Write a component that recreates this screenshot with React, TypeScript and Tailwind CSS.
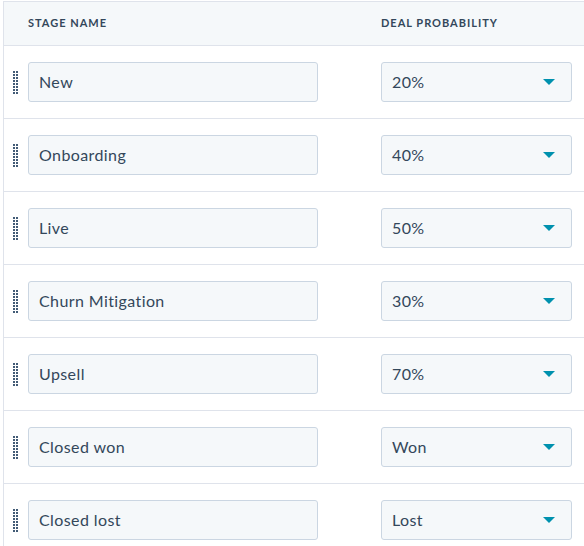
const stages = [
  { name: "New", probability: "20%" },
  { name: "Onboarding", probability: "40%" },
  { name: "Live", probability: "50%" },
  { name: "Churn Mitigation", probability: "30%" },
  { name: "Upsell", probability: "70%" },
  { name: "Closed won", probability: "Won" },
  { name: "Closed lost", probability: "Lost" },
];

function DragHandle() {
  const dots = [];
  for (let r = 0; r < 8; r++) {
    for (let c = 0; c < 2; c++) {
      dots.push(<rect key={`${r}-${c}`} x={c * 3} y={r * 3} width="2" height="2" />);
    }
  }
  return (
    <svg width="5" height="23" viewBox="0 0 5 23" className="fill-[#425b76]">
      {dots}
    </svg>
  );
}

function Caret() {
  return (
    <svg width="12" height="6" viewBox="0 0 12 6" className="fill-[#0091ae]">
      <path d="M0 0h12L6 6z" />
    </svg>
  );
}

export default function App() {
  return (
    <div className="min-h-screen bg-white pt-px pl-[3px] text-[#33475b] font-['Lato','Liberation_Sans',sans-serif]">
      <div className="border-l border-t border-[#dfe3eb]">
        <div className="flex h-[44px] items-center border-b border-[#dfe3eb] bg-[#f5f8fa] text-[11px] font-bold uppercase tracking-[0.09em] text-[#33475b]">
          <div className="w-[377px] pl-[24px]">Stage name</div>
          <div>Deal probability</div>
        </div>
        {stages.map((stage) => (
          <div key={stage.name} className="flex h-[73px] items-center border-b border-[#dfe3eb]">
            <div className="flex w-[24px] justify-center pr-[1px]">
              <DragHandle />
            </div>
            <div className="flex h-[40px] w-[290px] items-center rounded-[3px] border border-[#cbd6e2] bg-[#f5f8fa] px-[10px] text-[16px] tracking-[0.4px]">
              {stage.name}
            </div>
            <div className="ml-[63px] flex h-[40px] w-[191px] items-center justify-between rounded-[3px] border border-[#cbd6e2] bg-[#f5f8fa] pl-[10px] pr-[16px] text-[16px] tracking-[0.4px]">
              <span>{stage.probability}</span>
              <Caret />
            </div>
          </div>
        ))}
      </div>
    </div>
  );
}
